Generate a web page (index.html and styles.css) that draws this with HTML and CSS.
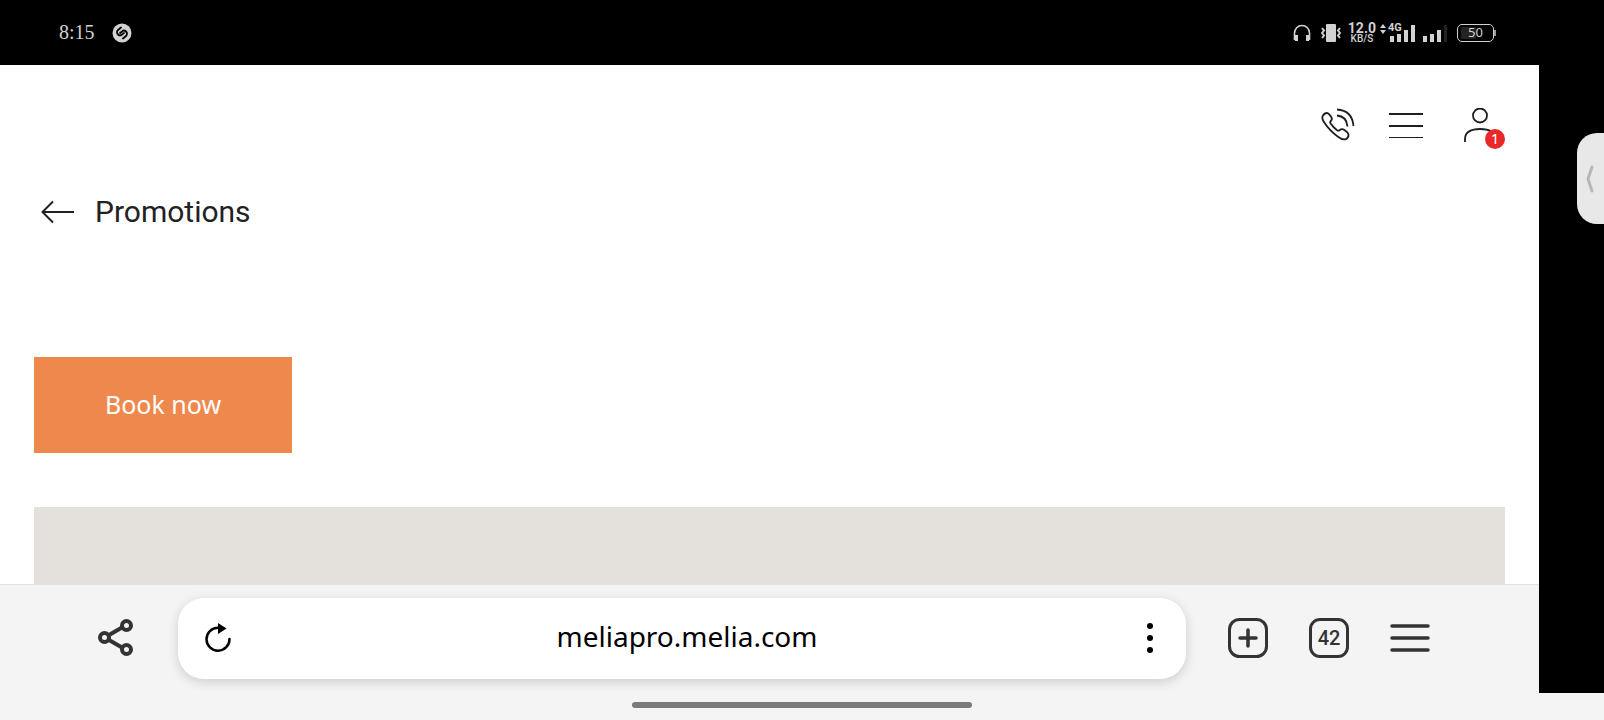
FILE: index.html
```
<!DOCTYPE html>
<html lang="en">
<head>
<meta charset="utf-8">
<meta name="viewport" content="width=device-width, initial-scale=1">
<title>Promotions</title>
<link rel="stylesheet" href="styles.css">
</head>
<body>

<div class="statusbar">
	<span class="clock">8:15</span>
	<svg class="shazam" width="20" height="20" viewBox="0 0 20 20">
		<circle cx="10" cy="10" r="9.500" fill="#d2d2d2"/>
		<path d="M9 4.500L6 7a3 3 0 0 0 0 4.500C7.500 13 9 12.500 10 11.500l2-1.500M11 15.500l3-2.500a3 3 0 0 0 0-4.500C12.500 7 11 7.500 10 8.500L8 10" fill="none" stroke="#000" stroke-width="1.800" stroke-linecap="round"/>
	</svg>
	<div class="status_icons">
		<svg width="18" height="18" viewBox="0 0 18 18">
			<path d="M1.500 16V9a7.500 7.500 0 0 1 15 0v7" fill="none" stroke="#d2d2d2" stroke-width="1.600"/>
			<path d="M1 11h4v6H2zM13 11h4l-1 6h-3z" fill="#d2d2d2"/>
		</svg>
		<svg width="20" height="20" viewBox="0 0 20 20">
			<rect x="5" y="1" width="10" height="18" rx="1" fill="#d2d2d2"/>
			<path d="M1 5l2 2.500-2 2.500 2 2.500L1 15M19 5l-2 2.500 2 2.500-2 2.500 2 2.500" fill="none" stroke="#d2d2d2" stroke-width="2"/>
		</svg>
		<div class="speed"><b>12.0</b><small>KB/S</small></div>
		<div class="signal">
			<svg width="36" height="20" viewBox="0 0 36 20" fill="#d2d2d2">
				<path d="M0 5l3-4 3 4zM0 7l3 4 3-4z"/>
				<rect x="10" y="13" width="4" height="6"/>
				<rect x="17" y="11" width="4" height="8"/>
				<rect x="24" y="7" width="4" height="12"/>
				<rect x="31" y="2" width="4" height="17"/>
			</svg>
			<span class="net">4G</span>
		</div>
		<svg width="24" height="20" viewBox="0 0 24 20" fill="#d2d2d2">
			<rect x="0" y="13" width="4" height="6"/>
			<rect x="7" y="11" width="4" height="8"/>
			<rect x="14" y="7" width="4" height="12"/>
			<rect x="21" y="2" width="3" height="17" fill="#222"/>
		</svg>
		<div class="battery">50</div>
	</div>
</div>

<div class="device">
	<main class="browser">
		<div class="page">
			<header class="topnav">
				<a href="#phone" aria-label="Call us">
					<svg width="34" height="36" viewBox="0 0 34 36" fill="none" stroke="#1f1f23" stroke-width="1.800">
						<path d="M1.500 8.500C2.300 6.700 4 5 6 5c1.600 0 2.400 1.500 4 3.600 1.600 2 1.200 3-.2 4.400-1 1-.8 1.800 0 2.800 1.700 2.500 3.700 4.500 6.200 6.400 1 .7 1.800.6 2.800-.2 1.400-1.200 2.600-1.400 4.200-.2 2.200 1.600 4.300 3 4.500 5 .1 1.800-1 3.500-2.700 4.300-2.200 1-4.700-.2-7.500-2.200C11.500 24.800 6.500 19.500 2.800 13.700 1.600 11.800.9 10.200 1.500 8.500z"/>
						<path d="M16 7.500c6.500.5 10 4.500 10.500 11M16 1.500c10 .5 15.500 6 16.500 16.500"/>
					</svg>
				</a>
				<button type="button" aria-label="Menu">
					<svg width="34" height="36" viewBox="0 0 34 36" stroke="#1f1f23">
						<path d="M0 6h34M0 18h34" stroke-width="2"/>
						<path d="M0 29.500h34" stroke-width="1"/>
					</svg>
				</button>
				<a class="account" href="#account" aria-label="My account">
					<svg width="34" height="36" viewBox="0 0 34 36" fill="none" stroke="#1f1f23" stroke-width="1.800">
						<circle cx="17" cy="7.500" r="7"/>
						<path d="M2 34v-3c0-7 6-10 15-10s15 3 15 10v3"/>
					</svg>
					<span class="badge">1</span>
				</a>
			</header>

			<a class="back" href="#back">
				<svg width="34" height="24" viewBox="0 0 34 24" fill="none" stroke="#222" stroke-width="2">
					<path d="M33 12H1M12 1.500L1.500 12 12 22.500"/>
				</svg>
				<h1>Promotions</h1>
			</a>

			<button class="book" type="button">Book now</button>
			<section class="panel"></section>
		</div>

		<nav class="toolbar">
			<button class="share" type="button" aria-label="Share">
				<svg width="36" height="38" viewBox="0 0 36 38" fill="none" stroke="#333" stroke-width="4">
					<circle cx="6.500" cy="18.500" r="4.500"/>
					<circle cx="28.500" cy="6.500" r="4.500"/>
					<circle cx="28.500" cy="30.500" r="4.500"/>
					<path d="M11 16l13-7.500M11 21l13 7.500"/>
				</svg>
			</button>
			<div class="urlbar">
				<button type="button" aria-label="Reload">
					<svg width="26" height="30" viewBox="0 0 26 30">
						<path d="M15 4.700H13A11.500 11.500 0 1 0 24.500 16" fill="none" stroke="#000" stroke-width="2.500" stroke-linecap="round"/>
						<path d="M13 0l8.500 5.500L13 11z"/>
					</svg>
				</button>
				<input type="text" value="meliapro.melia.com" aria-label="Address">
				<button type="button" aria-label="More">
					<svg width="6" height="30" viewBox="0 0 6 30">
						<circle cx="3" cy="3" r="3"/>
						<circle cx="3" cy="15" r="3"/>
						<circle cx="3" cy="27" r="3"/>
					</svg>
				</button>
			</div>
			<div class="tools">
				<button type="button" aria-label="New tab">
					<svg width="40" height="40" viewBox="0 0 40 40" fill="none" stroke="#333" stroke-width="3">
						<rect x="1.500" y="1.500" width="37" height="37" rx="10"/>
						<path d="M12 20h16M20 12v16" stroke-width="3.500" stroke-linecap="round"/>
					</svg>
				</button>
				<button class="tabs" type="button" aria-label="42 open tabs">42</button>
				<button type="button" aria-label="Browser menu">
					<svg width="40" height="28" viewBox="0 0 40 28" stroke="#333" stroke-width="3.500" stroke-linecap="round">
						<path d="M2 2h36M2 14h36M2 26h36"/>
					</svg>
				</button>
			</div>
		</nav>
	</main>

	<aside class="edge">
		<button class="handle" type="button" aria-label="Open side panel">
			<svg width="8" height="28" viewBox="0 0 8 28" fill="none" stroke="#b8b8b8" stroke-width="3" stroke-linecap="round">
				<path d="M6 2L2 14l4 12"/>
			</svg>
		</button>
	</aside>
</div>

<div class="gesture"><span></span></div>

</body>
</html>
```
FILE: styles.css
```
* {
	box-sizing: border-box;
}
body {
	margin: 0;
	height: 100vh;
	display: flex;
	flex-direction: column;
	background: #f4f4f4;
	color: #222;
	font-family: "Noto Sans", sans-serif;
}
svg {
	display: block;
	flex: none;
}
button {
	padding: 0;
	border: 0;
	background: none;
	color: inherit;
	font-family: inherit;
	cursor: pointer;
}
a {
	color: inherit;
	text-decoration: none;
}

/* status bar */
.statusbar {
	flex: none;
	height: 65px;
	padding: 0 110px 0 59px;
	display: flex;
	align-items: center;
	background: #000;
	color: #d2d2d2;
}
.clock {
	font: 20px "Liberation Serif", serif;
}
.shazam {
	margin-left: 17px;
}
.status_icons {
	margin-left: auto;
	display: flex;
	align-items: center;
	gap: 7px;
}
.speed {
	display: flex;
	flex-direction: column;
	align-items: center;
	font-family: Roboto, sans-serif;
}
.speed b {
	font-size: 14px;
	line-height: 12px;
}
.speed small {
	font-size: 10px;
	font-weight: 500;
	line-height: 10px;
}
.status_icons > :first-child {
	margin-right: 3px;
}
.signal {
	position: relative;
	margin-left: -3px;
}
.net {
	position: absolute;
	top: 0;
	left: 8px;
	font: bold 11px/10px Roboto, sans-serif;
}
.battery {
	position: relative;
	margin-left: 3px;
	width: 37px;
	height: 18px;
	border: 1px solid #d2d2d2;
	border-radius: 5px;
	background: linear-gradient(#222, #222) 3px 2px / 15px 12px no-repeat;
	font: 13px/15px "Noto Sans", sans-serif;
	text-align: center;
}
.battery::after {
	content: "";
	position: absolute;
	top: 5px;
	right: -3px;
	width: 2px;
	height: 6px;
	background: #999;
}

/* web page */
.device {
	flex: 1;
	min-height: 0;
	display: flex;
}
.browser {
	flex: 1;
	min-width: 0;
	display: flex;
	flex-direction: column;
}
.page {
	flex: 1;
	min-height: 0;
	padding: 43px 34px 0;
	display: flex;
	flex-direction: column;
	align-items: flex-start;
	background: #fff;
	overflow: hidden;
}
.topnav {
	align-self: flex-end;
	display: flex;
	gap: 34px;
	padding-right: 8px;
}
.account {
	position: relative;
	margin-left: 6px;
}
.badge {
	position: absolute;
	left: 22px;
	top: 21px;
	width: 20px;
	height: 20px;
	border-radius: 50%;
	background: #e92828;
	color: #fff;
	font-size: 15px;
	line-height: 19px;
	text-align: center;
}
.back {
	display: flex;
	align-items: center;
	gap: 20px;
	margin: 48px 0 0 7px;
}
h1 {
	margin: 0;
	font: 400 30px/40px Roboto, sans-serif;
}
.book {
	flex: none;
	margin-top: 125px;
	width: 258px;
	height: 96px;
	padding-bottom: 2px;
	background: #ee884c;
	color: #fff;
	font-size: 25px;
}
.panel {
	align-self: stretch;
	flex: 1;
	margin-top: 54px;
	background: #e4e1dc;
}

/* browser toolbar */
.toolbar {
	flex: none;
	height: 109px;
	padding: 13px 109px 0 98px;
	display: flex;
	align-items: flex-start;
	border-top: 1px solid #e2e2e2;
}
.toolbar > * {
	height: 80px;
	display: flex;
	align-items: center;
}
.toolbar > .urlbar {
	flex: 1;
	min-width: 0;
	height: 81px;
	margin: 0 42px 0 44px;
	padding: 0 33px 2px 27px;
	border-radius: 26px;
	background: #fff;
	box-shadow: 0 3px 12px rgba(0, 0, 0, 0.16);
}
.urlbar input {
	flex: 1;
	min-width: 0;
	padding: 0 4px 4px 0;
	border: 0;
	outline: 0;
	background: none;
	color: #000;
	font: 28px "Noto Sans", sans-serif;
	text-align: center;
}
.tools {
	gap: 41px;
}
.tabs {
	width: 40px;
	height: 40px;
	border: 3px solid #333;
	border-radius: 11px;
	color: #333;
	font: 500 20px/32px Roboto, sans-serif;
}

/* screen edge */
.edge {
	width: 65px;
	padding-top: 68px;
	background: #000;
}
.handle {
	width: 27px;
	height: 91px;
	margin-left: auto;
	padding-left: 9px;
	display: block;
	border-radius: 20px 0 0 20px;
	background: #e8e8e8;
}
.gesture {
	flex: none;
	height: 27px;
	padding-top: 9px;
}
.gesture span {
	display: block;
	width: 340px;
	height: 6px;
	margin: 0 auto;
	border-radius: 3px;
	background: #7b7b7b;
}
```
